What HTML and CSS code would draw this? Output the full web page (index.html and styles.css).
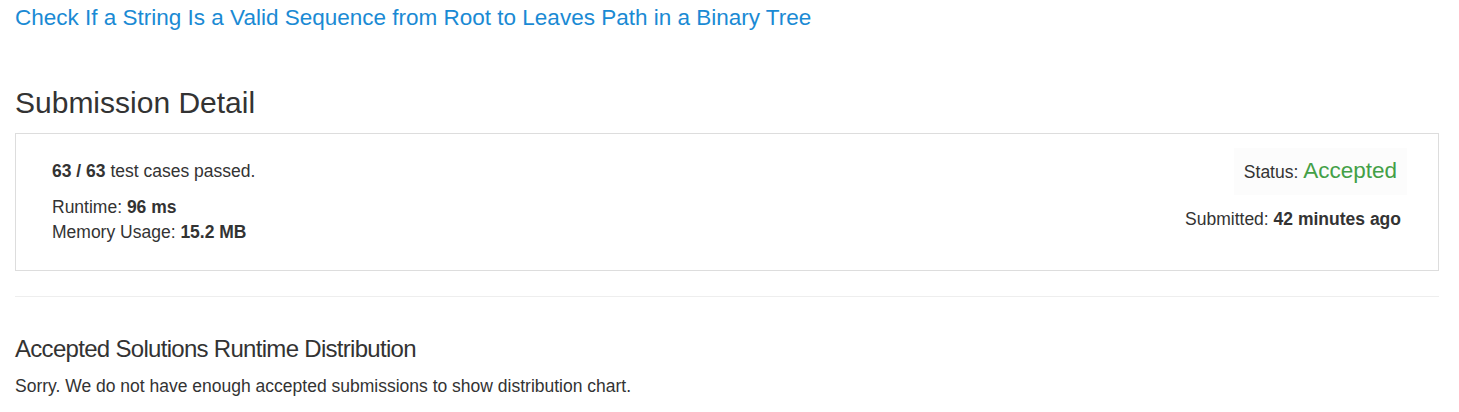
FILE: index.html
```html
<!DOCTYPE html>
<html>
<head>
<meta charset="utf-8">
<link rel="stylesheet" href="styles.css">
</head>
<body>
<div class="container">
  <h4 class="title"><a href="#">Check If a String Is a Valid Sequence from Root to Leaves Path in a Binary Tree</a></h4>
  <h2 class="heading">Submission Detail</h2>
  <div class="panel">
    <div class="left">
      <div class="line"><b>63 / 63</b> test cases passed.</div>
      <div class="stats">
        <div class="line">Runtime: <b>96 ms</b></div>
        <div class="line">Memory Usage: <b>15.2 MB</b></div>
      </div>
    </div>
    <div class="right">
      <div class="status">Status: <span class="accepted">Accepted</span></div>
      <div class="line">Submitted: <b>42 minutes ago</b></div>
    </div>
  </div>
  <hr class="divider">
  <h3 class="sub">Accepted Solutions Runtime Distribution</h3>
  <p class="note">Sorry. We do not have enough accepted submissions to show distribution chart.</p>
</div>
</body>
</html>
```

FILE: styles.css
```css
html, body {
  margin: 0;
  padding: 0;
  background: #fff;
}
body {
  font-family: "Liberation Sans", Arial, sans-serif;
  color: #333;
  font-size: 17.5px;
}
.container {
  padding: 0 20px 0 15px;
}
.title {
  margin: 5px 0 0 0;
  font-size: 22.5px;
  font-weight: normal;
  line-height: 26px;
}
.title a {
  color: #1a8ad4;
  text-decoration: none;
}
.heading {
  margin: 54px 0 0 0;
  font-size: 30px;
  font-weight: normal;
  line-height: 36px;
}
.panel {
  margin-top: 12px;
  border: 1px solid #ddd;
  display: flex;
  justify-content: space-between;
  padding: 14px 37px 22px 36px;
  height: 100px;
}
.left {
  padding-top: 11px;
}
.line {
  line-height: 25px;
}
.stats {
  margin-top: 11px;
}
.right {
  display: flex;
  flex-direction: column;
  align-items: flex-end;
}
.status {
  background: #fcfcfc;
  padding: 8px 10px 8px 10px;
  margin-right: -6px;
  line-height: 30px;
}
.accepted {
  color: #43a047;
  font-size: 22.5px;
}
.right .line {
  margin-top: 12px;
}
.divider {
  border: 0;
  border-top: 1px solid #eee;
  margin: 25px 0 0 0;
}
.sub {
  margin: 39px 0 0 0;
  font-size: 24px;
  font-weight: normal;
  line-height: 26px;
  letter-spacing: -0.7px;
}
.note {
  margin: 13px 0 0 0;
  font-size: 17.5px;
  line-height: 22px;
}
```
